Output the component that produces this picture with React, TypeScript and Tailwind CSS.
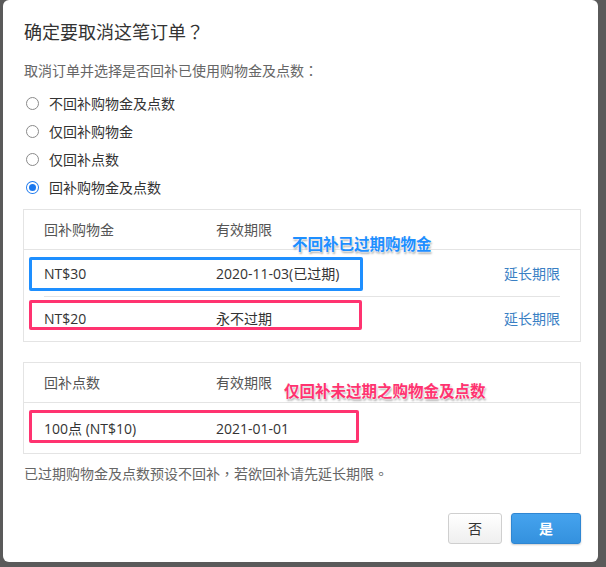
import React, { useState } from 'react';

interface CreditRow {
  amount: string;
  expiry: string;
  extend?: boolean;
}

const creditRows: CreditRow[] = [
  { amount: 'NT$30', expiry: '2020-11-03(已过期)', extend: true },
  { amount: 'NT$20', expiry: '永不过期', extend: true },
];

const options = ['不回补购物金及点数', '仅回补购物金', '仅回补点数', '回补购物金及点数'];

const Radio: React.FC<{ checked: boolean }> = ({ checked }) =>
  checked ? (
    <span className="w-[13px] h-[13px] rounded-full bg-[#1b78ee] flex items-center justify-center">
      <span className="w-[7px] h-[7px] rounded-full bg-[#1b78ee] ring-2 ring-white" />
    </span>
  ) : (
    <span className="w-[13px] h-[13px] rounded-full border border-[#8a8a8a] bg-white" />
  );

export default function App() {
  const [selected, setSelected] = useState(3);

  return (
    <div className="w-[606px] h-[567px] bg-[#5a5a5a] overflow-hidden font-['Open_Sans','Noto_Sans_CJK_TC',sans-serif]">
      <div className="ml-[3px] w-[595px] h-[562px] bg-white rounded-[6px] pl-[20px] pr-[17px] pt-[20px] flex flex-col">
        <h1 className="ml-[1px] text-[18px] leading-[24px] text-[#333]">确定要取消这笔订单？</h1>

        <p className="ml-[1px] mt-[17px] text-[14px] leading-[20px] text-[#666]">取消订单并选择是否回补已使用购物金及点数：</p>

        {/* options */}
        <div className="mt-[8px] flex flex-col">
          {options.map((label, i) => (
            <button
              key={label}
              onClick={() => setSelected(i)}
              className="h-[28px] flex items-center gap-[10px] pl-[3px] text-[14px] text-[#333]"
            >
              <Radio checked={selected === i} />
              <span>{label}</span>
            </button>
          ))}
        </div>

        {/* credit table */}
        <div className="relative mt-[8px] border border-[#e4e4e4] text-[14px]">
          <div className="h-[40px] flex items-center pl-[20px] border-b border-[#e4e4e4] text-[#555]">
            <span className="w-[172px]">回补购物金</span>
            <span>有效期限</span>
          </div>
          {creditRows.map((row, i) => (
            <div key={row.amount} className={`relative flex items-center pl-[20px] pr-[20px] text-[#333] ${i === 0 ? 'h-[46px]' : 'h-[45px]'}`}>
              <span className="w-[172px]">{row.amount}</span>
              <span className="flex-1">{row.expiry}</span>
              {row.extend && <a className="text-[#3a80c4] cursor-pointer">延长期限</a>}
              {i === 0 && (
                <>
                  <div className="absolute left-[5px] top-[7px] w-[334px] h-[34px] border-[3px] border-[#1e8fff] rounded-[2px]" />
                  <div className="absolute left-[20px] right-[20px] bottom-[-1px] h-px bg-[#e4e4e4]" />
                </>
              )}
              {i === 1 && (
                <div className="absolute left-[5px] top-[4px] w-[333px] h-[30px] border-[3px] border-[#ff3370] rounded-[2px]" />
              )}
            </div>
          ))}
          <span className="absolute left-[268px] top-[24px] text-[15.5px] leading-[20px] font-bold text-[#1e8fff] [text-shadow:0_0_2px_#fff,0_0_2px_#fff,1px_2px_2px_rgba(0,0,0,0.35)]">
            不回补已过期购物金
          </span>
        </div>

        {/* points table */}
        <div className="relative mt-[20px] border border-[#e4e4e4] text-[14px]">
          <div className="h-[40px] flex items-center pl-[20px] border-b border-[#e4e4e4] text-[#555]">
            <span className="w-[172px]">回补点数</span>
            <span>有效期限</span>
          </div>
          <div className="relative h-[50px] flex items-center pl-[20px] text-[#333]">
            <span className="w-[172px]">100点 (NT$10)</span>
            <span>2021-01-01</span>
            <div className="absolute left-[5px] top-[7px] w-[330px] h-[33px] border-[3px] border-[#ff3370] rounded-[2px]" />
          </div>
          <span className="absolute left-[260px] top-[18px] text-[15.5px] leading-[20px] font-bold text-[#ff3370] [text-shadow:0_0_2px_#fff,0_0_2px_#fff,1px_2px_2px_rgba(0,0,0,0.35)]">
            仅回补未过期之购物金及点数
          </span>
        </div>

        <p className="ml-[1px] mt-[10px] text-[14px] leading-[20px] text-[#666]">已过期购物金及点数预设不回补，若欲回补请先延长期限。</p>

        {/* actions */}
        <div className="mt-[29px] flex justify-end gap-[9px]">
          <button className="w-[54px] h-[31px] rounded-[3px] border border-[#cfcfcf] bg-gradient-to-b from-white to-[#efefef] text-[14px] text-[#333]">
            否
          </button>
          <button className="w-[70px] h-[31px] rounded-[3px] border border-[#2f86d2] bg-gradient-to-b from-[#45a3ee] to-[#3491de] text-[14px] font-bold text-white shadow-[0_1px_2px_rgba(0,0,0,0.2)]">
            是
          </button>
        </div>
      </div>
    </div>
  );
}
